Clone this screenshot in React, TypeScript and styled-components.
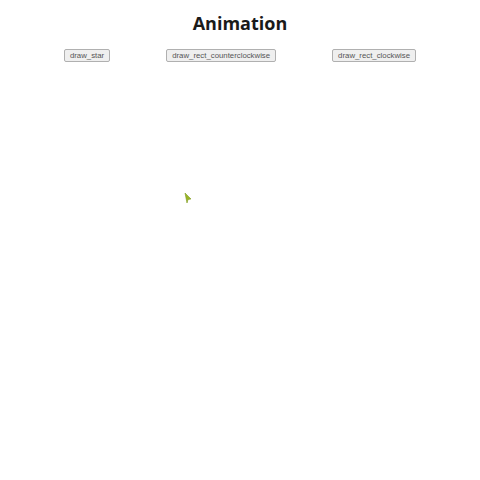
import React from "react";
import styled, { createGlobalStyle } from "styled-components";

const Global = createGlobalStyle`
  html, body {
    margin: 0;
    padding: 0;
    background: #ffffff;
  }
  body {
    font-family: "Open Sans", "Liberation Sans", sans-serif;
  }
`;

const Page = styled.div`
  width: 480px;
  height: 480px;
  display: flex;
  flex-direction: column;
  align-items: center;
  box-sizing: border-box;
  padding-top: 10px;
`;

const Title = styled.h1`
  margin: 0;
  font-family: "Open Sans", "Liberation Sans", sans-serif;
  font-size: 18px;
  font-weight: 700;
  line-height: 26px;
  color: #1a1a1a;
`;

const Toolbar = styled.div`
  display: flex;
  justify-content: center;
  gap: 56px;
  margin-top: 13px;
`;

const Button = styled.button`
  font-family: "Liberation Sans", Arial, sans-serif;
  font-size: 7.8px;
  line-height: 9px;
  height: 13px;
  padding: 1px 5px;
  color: #555;
  background: #efefef;
  border: 1px solid #b0b0b0;
  border-radius: 2px;
`;

const Canvas = styled.div`
  position: relative;
  flex: 1;
  width: 100%;
`;

const Turtle = styled.svg`
  position: absolute;
  left: 183px;
  top: 130px;
`;

export default function App() {
  return (
    <>
      <Global />
      <Page>
        <Title>Animation</Title>
        <Toolbar>
          <Button>draw_star</Button>
          <Button>draw_rect_counterclockwise</Button>
          <Button>draw_rect_clockwise</Button>
        </Toolbar>
        <Canvas>
          <Turtle width="10" height="12" viewBox="0 0 10 12">
            <path d="M2 1 L8 7 L5 7.5 L4 11 Z" fill="#9ab526" stroke="#7d9a1c" strokeWidth="0.6" />
          </Turtle>
        </Canvas>
      </Page>
    </>
  );
}
